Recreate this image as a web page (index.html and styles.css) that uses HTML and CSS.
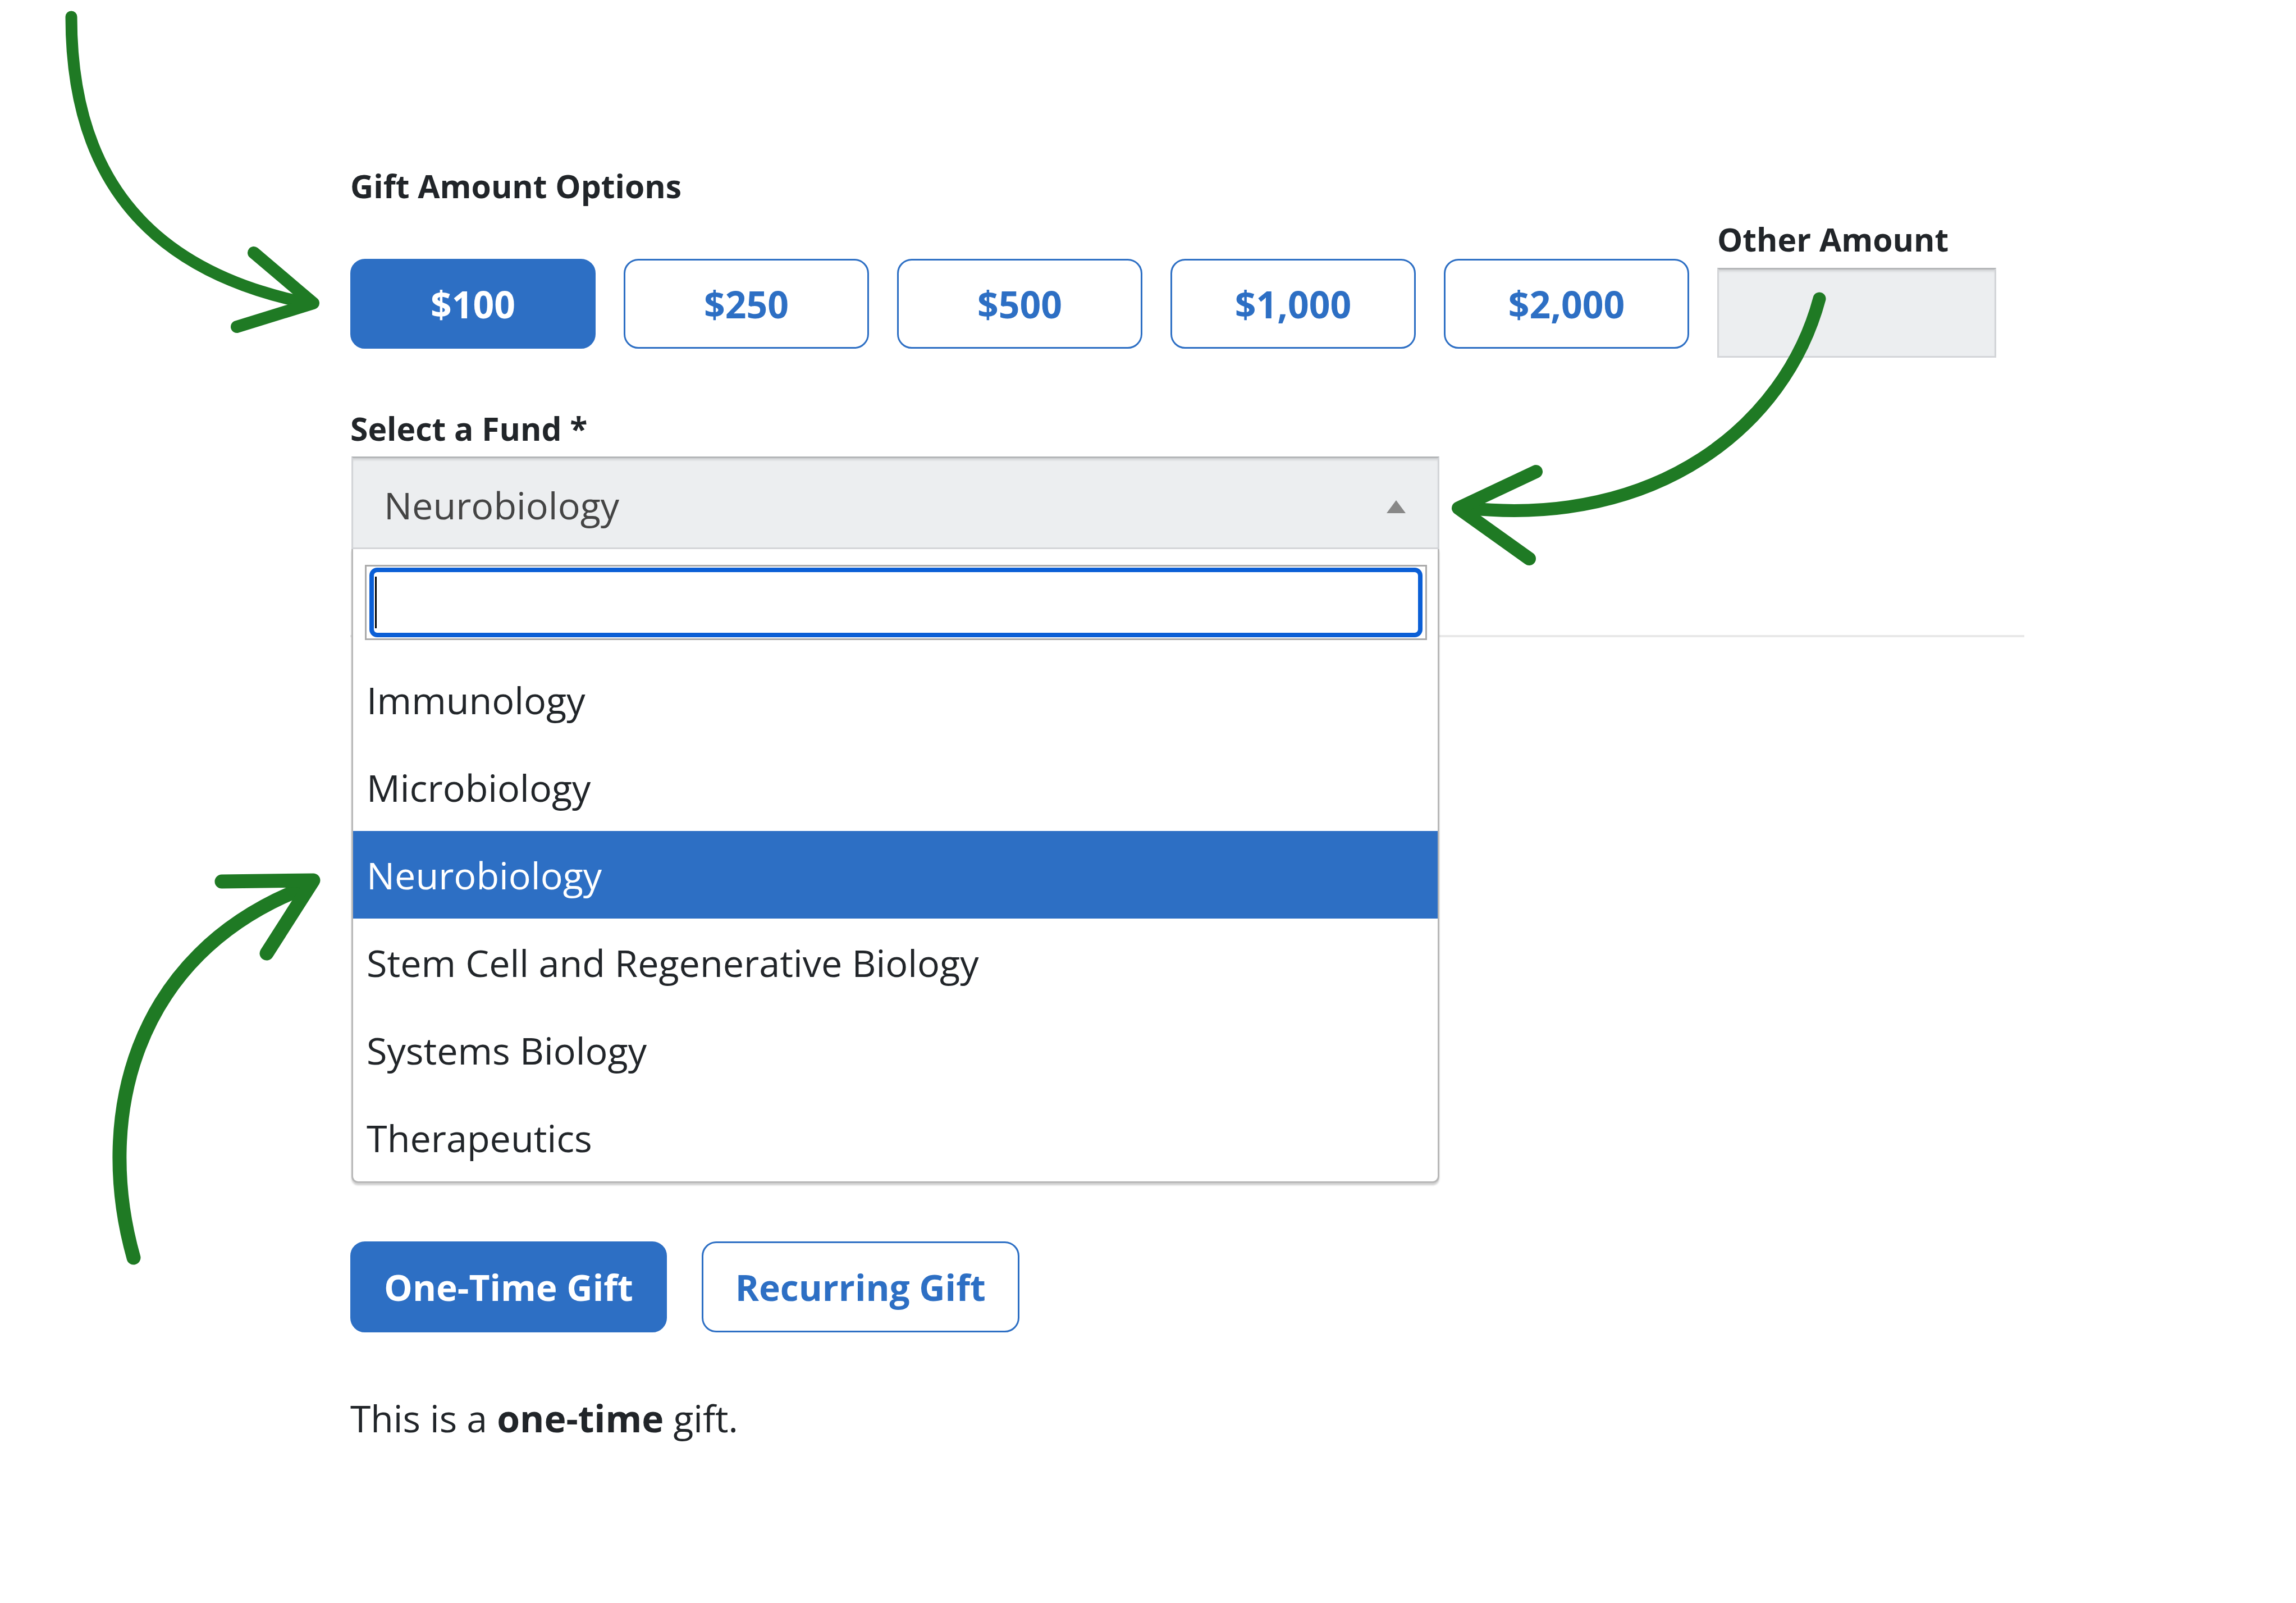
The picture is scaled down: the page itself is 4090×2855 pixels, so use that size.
FILE: index.html
```html
<!DOCTYPE html>
<html lang="en">
<head>
    <title>Make a Gift</title>
    <meta charset="UTF-8">
    <meta name="viewport" content="width=device-width, initial-scale=1.0">
    <link rel="stylesheet" href="styles.css">
</head>
<body>
    <div class="form">
        <div class="amounts">
            <div class="amount-group">
                <div class="label">Gift Amount Options</div>
                <div class="amount-buttons">
                    <button class="button active">$100</button>
                    <button class="button">$250</button>
                    <button class="button">$500</button>
                    <button class="button">$1,000</button>
                    <button class="button">$2,000</button>
                </div>
            </div>
            <div class="other">
                <div class="label">Other Amount</div>
                <div class="field other-input"></div>
            </div>
        </div>

        <div class="fund">
            <div class="label">Select a Fund *</div>
            <div class="select-wrap">
                <div class="field select">
                    <span>Neurobiology</span>
                    <span class="caret-up"></span>
                </div>
                <div class="dropdown">
                    <div class="search-area">
                        <div class="search">
                            <div class="search-ring"><span class="cursor"></span></div>
                        </div>
                    </div>
                    <div class="option">Immunology</div>
                    <div class="option">Microbiology</div>
                    <div class="option selected">Neurobiology</div>
                    <div class="option">Stem Cell and Regenerative Biology</div>
                    <div class="option">Systems Biology</div>
                    <div class="option">Therapeutics</div>
                </div>
            </div>
        </div>

        <hr class="rule">

        <div class="gift-type">
            <button class="button wide active">One-Time Gift</button>
            <button class="button wide">Recurring Gift</button>
        </div>

        <p class="note">This is a <b>one-time</b> gift.</p>
    </div>

    <!-- annotation arrows drawn over the form -->
    <svg class="arrows" width="4090" height="2855" viewBox="0 0 4090 2855">
        <g fill="none" stroke="#1f7a24" stroke-linecap="round" stroke-linejoin="round">
            <path d="M127 30 C127 300, 250 480, 548 540" stroke-width="21"/>
            <path d="M452 450 L558 540 L422 582" stroke-width="22"/>

            <path d="M3241 532 C3180 760, 2950 940, 2615 905" stroke-width="23"/>
            <path d="M2736 840 L2598 905 L2724 995" stroke-width="24"/>

            <path d="M238 2240 C170 2000, 230 1700, 545 1580" stroke-width="25"/>
            <path d="M395 1570 L558 1568 L475 1698" stroke-width="25"/>
        </g>
    </svg>
</body>
</html>
```

FILE: styles.css
```css
:root{
    --blue: #2d6fc4;
    --text: #212529;
    --field: #eceef0;
    --field-border: #d3d5d8;
}

html, body{
    margin: 0;
    padding: 0;
    background-color: #ffffff;
    color: var(--text);
    font-family: "Open Sans", "Noto Sans", sans-serif;
}

body{
    width: 4090px;
    height: 2855px;
    overflow: hidden;
    position: relative;
}

.form{
    padding-top: 288px;
    margin-left: 624px;
    width: 2982px;
}

.label{
    font-size: 57px;
    font-weight: 700;
    line-height: 87px;
}

.amounts{
    display: flex;
    align-items: flex-start;
    gap: 50px;
}

.amount-buttons{
    display: flex;
    gap: 50px;
    margin-top: 86px;
}

.button{
    font-family: "Open Sans", "Noto Sans", sans-serif;
    font-size: 66px;
    font-weight: 700;
    color: var(--blue);
    background-color: #ffffff;
    border: 3px solid var(--blue);
    border-radius: 26px;
    height: 160px;
    width: 437px;
    padding: 0;
}

.button.active{
    background-color: var(--blue);
    color: #ffffff;
}

.other{
    margin-top: 95px;
}

.field{
    box-sizing: border-box;
    background-color: var(--field);
    border: 3px solid var(--field-border);
    border-top-color: #b4b6b8;
    box-shadow: inset 0 5px 4px -2px rgba(0, 0, 0, 0.12);
}

.other-input{
    width: 497px;
    height: 160px;
    margin-top: 7px;
}

.fund{
    margin-top: 83px;
}

.select-wrap{
    position: relative;
    width: 1938px;
    margin-top: 6px;
    margin-left: 2px;
}

.select{
    height: 165px;
    display: flex;
    align-items: center;
    justify-content: space-between;
    padding: 6px 57px 0 55px;
    font-size: 66.5px;
    color: #444444;
}

.caret-up{
    width: 0;
    height: 0;
    border-left: 17px solid transparent;
    border-right: 17px solid transparent;
    border-bottom: 23px solid #888888;
    margin-top: 8px;
}

.dropdown{
    position: absolute;
    top: 165px;
    left: 0;
    right: 0;
    z-index: 2;
    background-color: #ffffff;
    border: 3px solid #b8b8b8;
    border-top: none;
    border-radius: 0 0 12px 12px;
    box-shadow: 0 4px 3px rgba(0, 0, 0, 0.18);
    overflow: hidden;
}

.search-area{
    height: 190px;
    box-sizing: border-box;
    padding: 28px 19px 0 21px;
}

.search{
    height: 134px;
    box-sizing: border-box;
    border: 3px solid #aaaaaa;
    padding: 2px 5px;
}

.search-ring{
    height: 100%;
    box-sizing: border-box;
    border: 8px solid #0b5fd6;
    border-radius: 14px;
    padding: 8px 2px;
    display: flex;
}

.cursor{
    width: 3px;
    background-color: #000000;
}

.option{
    height: 156px;
    display: flex;
    align-items: center;
    padding-left: 24px;
    font-size: 66.5px;
    color: var(--text);
}

.option.selected{
    background-color: var(--blue);
    color: #ffffff;
}

.rule{
    margin: 153px 0 0 0;
    border: none;
    height: 4px;
    background-color: #e8e8e8;
}

.gift-type{
    display: flex;
    gap: 62px;
    margin-top: 1076px;
}

.button.wide{
    width: auto;
    height: 162px;
    padding: 0 57px;
    font-size: 64px;
}

.note{
    margin: 103px 0 0 0;
    font-size: 66px;
    line-height: 99px;
}

.arrows{
    position: absolute;
    top: 0;
    left: 0;
    z-index: 5;
    pointer-events: none;
}
```
